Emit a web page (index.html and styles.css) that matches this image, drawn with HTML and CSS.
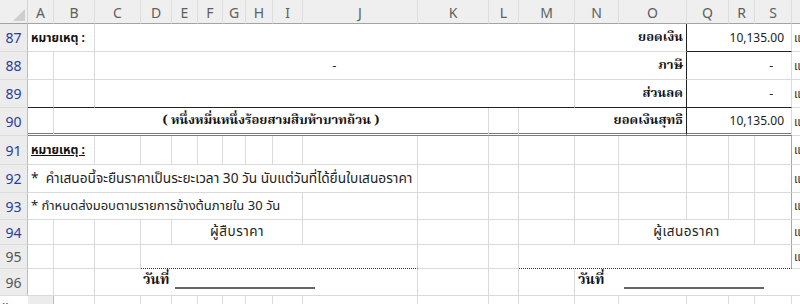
FILE: index.html
```html
<!DOCTYPE html>
<html lang="th">
<head>
    <meta charset="UTF-8">
    <title>ใบเสนอราคา</title>
    <link rel="stylesheet" href="styles.css">
</head>
<body>
    <div class="sheet">
        <!-- column headers -->
        <div class="corner"><span class="tri"></span></div>
        <div class="colhdr">A</div>
        <div class="colhdr">B</div>
        <div class="colhdr">C</div>
        <div class="colhdr">D</div>
        <div class="colhdr">E</div>
        <div class="colhdr">F</div>
        <div class="colhdr">G</div>
        <div class="colhdr">H</div>
        <div class="colhdr">I</div>
        <div class="colhdr">J</div>
        <div class="colhdr">K</div>
        <div class="colhdr">L</div>
        <div class="colhdr">M</div>
        <div class="colhdr">N</div>
        <div class="colhdr">O</div>
        <div class="colhdr">Q</div>
        <div class="colhdr">R</div>
        <div class="colhdr">S</div>
        <div class="colhdr"></div>

        <!-- 87 -->
        <div class="rowhdr sel">87</div>
        <div class="cell span2 note">หมายเหตุ :</div>
        <div class="cell span11"></div>
        <div class="cell span2 label boxl">ยอดเงิน</div>
        <div class="cell span3 amount boxb">10,135.00</div>
        <div class="cell edge">แ</div>

        <!-- 88 -->
        <div class="rowhdr sel">88</div>
        <div class="cell"></div>
        <div class="cell"></div>
        <div class="cell span11 center">-</div>
        <div class="cell span2 label boxl">ภาษี</div>
        <div class="cell span3 amount dash">-</div>
        <div class="cell edge">แ</div>

        <!-- 89 -->
        <div class="rowhdr sel">89</div>
        <div class="cell boxb"></div>
        <div class="cell boxb"></div>
        <div class="cell span11 boxb"></div>
        <div class="cell span2 label boxl boxb">ส่วนลด</div>
        <div class="cell span3 amount dash boxb">-</div>
        <div class="cell edge">แ</div>

        <!-- 90 -->
        <div class="rowhdr sel">90</div>
        <div class="cell dbl"></div>
        <div class="cell span10 center words dbl">( หนึ่งหมื่นหนึ่งร้อยสามสิบห้าบาทถ้วน )</div>
        <div class="cell dbl"></div>
        <div class="cell span3 label boxl dbl">ยอดเงินสุทธิ</div>
        <div class="cell span3 amount dbl">10,135.00</div>
        <div class="cell edge">แ</div>

        <!-- 91 -->
        <div class="rowhdr sel">91</div>
        <div class="cell span2 note under">หมายเหตุ :</div>
        <div class="cell"></div>
        <div class="cell"></div>
        <div class="cell"></div>
        <div class="cell"></div>
        <div class="cell"></div>
        <div class="cell"></div>
        <div class="cell"></div>
        <div class="cell"></div>
        <div class="cell"></div>
        <div class="cell"></div>
        <div class="cell"></div>
        <div class="cell"></div>
        <div class="cell"></div>
        <div class="cell"></div>
        <div class="cell"></div>
        <div class="cell last"></div>
        <div class="cell edge">แ</div>

        <!-- 92 -->
        <div class="rowhdr sel">92</div>
        <div class="cell span10 text wide">*&nbsp; คำเสนอนี้จะยืนราคาเป็นระยะเวลา 30 วัน นับแต่วันที่ได้ยื่นใบเสนอราคา</div>
        <div class="cell"></div>
        <div class="cell"></div>
        <div class="cell"></div>
        <div class="cell"></div>
        <div class="cell"></div>
        <div class="cell"></div>
        <div class="cell"></div>
        <div class="cell last"></div>
        <div class="cell edge">แ</div>

        <!-- 93 -->
        <div class="rowhdr sel">93</div>
        <div class="cell span9 text">* กำหนดส่งมอบตามรายการข้างต้นภายใน 30 วัน</div>
        <div class="cell"></div>
        <div class="cell"></div>
        <div class="cell"></div>
        <div class="cell"></div>
        <div class="cell"></div>
        <div class="cell"></div>
        <div class="cell"></div>
        <div class="cell"></div>
        <div class="cell last"></div>
        <div class="cell edge">แ</div>

        <!-- 94 -->
        <div class="rowhdr sel">94</div>
        <div class="cell"></div>
        <div class="cell"></div>
        <div class="cell"></div>
        <div class="cell"></div>
        <div class="cell span5 center signer">ผู้สืบราคา</div>
        <div class="cell"></div>
        <div class="cell"></div>
        <div class="cell"></div>
        <div class="cell"></div>
        <div class="cell"></div>
        <div class="cell span3 center signer">ผู้เสนอราคา</div>
        <div class="cell last"></div>
        <div class="cell edge">แ</div>

        <!-- 95 -->
        <div class="rowhdr">95</div>
        <div class="cell"></div>
        <div class="cell"></div>
        <div class="cell"></div>
        <div class="cell span7 dots"></div>
        <div class="cell"></div>
        <div class="cell"></div>
        <div class="cell span6 dots last"></div>
        <div class="cell edge">แ</div>

        <!-- 96 -->
        <div class="rowhdr">96</div>
        <div class="cell"></div>
        <div class="cell"></div>
        <div class="cell span8 sign sign-left">วันที่ <span class="blank"></span></div>
        <div class="cell"></div>
        <div class="cell"></div>
        <div class="cell"></div>
        <div class="cell span6 sign last">วันที่ <span class="blank blank-right"></span></div>
        <div class="cell edge">แ</div>

        <!-- 97 -->
        <div class="rowhdr"></div>
        <div class="cell"></div>
        <div class="cell"></div>
        <div class="cell"></div>
        <div class="cell"></div>
        <div class="cell"></div>
        <div class="cell"></div>
        <div class="cell"></div>
        <div class="cell"></div>
        <div class="cell"></div>
        <div class="cell"></div>
        <div class="cell"></div>
        <div class="cell"></div>
        <div class="cell"></div>
        <div class="cell"></div>
        <div class="cell"></div>
        <div class="cell"></div>
        <div class="cell"></div>
        <div class="cell last"></div>
        <div class="cell edge"></div>
    </div>
</body>
</html>
```

FILE: styles.css
```css
body {
    margin: 0;
    background: #ffffff;
    overflow: hidden;
    font-family: Tahoma, "Noto Sans Thai", "Loma", "Garuda", "Waree", "DejaVu Sans", sans-serif;
    font-size: 12px;
    color: #222222;
}

.sheet {
    display: grid;
    grid-template-columns: 28px 26px 41px 46px 31px 26px 25px 23px 27px 30px 115px 71px 30px 56px 44px 68px 42px 26px 37px 40px;
    grid-template-rows: 24px 28px 28px 28px 28px 29px 28px 27px 25px 24px 27px 20px;
    width: 832px;
}

/* headers */
.corner {
    position: relative;
    background: #efefef;
    border-right: 1px solid #d4d4d4;
    border-bottom: 1px solid #a3a3a3;
}

.tri {
    position: absolute;
    right: 2px;
    bottom: 2px;
    width: 0;
    height: 0;
    border-left: 12px solid transparent;
    border-bottom: 12px solid #cfcfcf;
}

.colhdr {
    background: #efefef;
    border-right: 1px solid #dedede;
    border-bottom: 1px solid #a3a3a3;
    display: flex;
    align-items: center;
    justify-content: center;
    padding-top: 2px;
    font-family: "Noto Sans", "DejaVu Sans", sans-serif;
    font-size: 14px;
    color: #5e5e5e;
}

.rowhdr {
    background: #ececec;
    border-right: 1px solid #bdbdbd;
    border-bottom: 1px solid #dcdcdc;
    display: flex;
    align-items: center;
    justify-content: center;
    font-family: "Noto Sans", "DejaVu Sans", sans-serif;
    font-size: 14px;
    color: #555555;
}

.rowhdr.sel {
    color: #2a3b9c;
}

/* cells */
.cell {
    border-right: 1px solid #dadada;
    border-bottom: 1px solid #dadada;
    display: flex;
    align-items: center;
    padding: 0 3px;
    white-space: nowrap;
    min-width: 0;
}

.span2 { grid-column: span 2; }
.span3 { grid-column: span 3; }
.span5 { grid-column: span 5; }
.span6 { grid-column: span 6; }
.span7 { grid-column: span 7; }
.span8 { grid-column: span 8; }
.span9 { grid-column: span 9; }
.span10 { grid-column: span 10; }
.span11 { grid-column: span 11; }

.center {
    justify-content: center;
}

.note {
    font-weight: bold;
    color: #111111;
}

.under {
    text-decoration: underline;
}

.text {
    font-size: 13px;
}

.text.wide {
    font-size: 13.7px;
}

.signer {
    font-size: 13.5px;
    letter-spacing: 0.5px;
}

.label {
    justify-content: flex-end;
    font-family: "Noto Serif Thai", "Kinnari", "Norasi", serif;
    font-weight: bold;
    font-size: 13px;
    color: #111111;
}

.words {
    font-family: "Noto Serif Thai", "Kinnari", "Norasi", serif;
    font-weight: bold;
    font-size: 13px;
    color: #111111;
}

.amount {
    justify-content: flex-end;
    padding-right: 7px;
}

.dash {
    padding-right: 18px;
}

.boxl {
    border-right: 1px solid #222222;
}

.boxb {
    border-bottom: 1px solid #222222;
}

.dbl {
    border-bottom: 3px double #7a7a7a;
}

.dots {
    border-bottom: 1px dotted #333333;
}

.sign {
    font-family: "Noto Serif Thai", "Kinnari", "Norasi", serif;
    font-weight: bold;
    font-size: 14px;
    color: #111111;
    align-items: flex-end;
    padding-bottom: 4px;
}

.sign-left {
    padding-left: 48px;
}

.blank {
    display: inline-block;
    width: 140px;
    height: 2px;
    margin-left: 6px;
    margin-bottom: 2px;
    background: #666666;
}

.blank-right {
    margin-left: 20px;
}

.last {
    border-right: 1px solid #a8a8a8;
}

.edge {
    border-right: none;
    border-bottom: 1px solid #dadada;
    padding-left: 2px;
    color: #333333;
}
```
